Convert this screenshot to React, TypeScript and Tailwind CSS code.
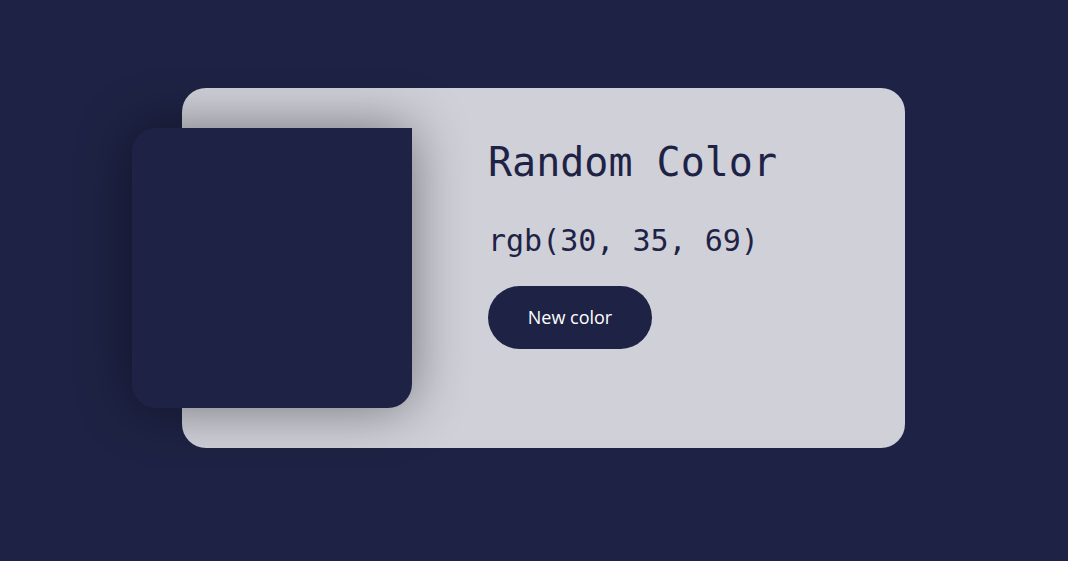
export default function App() {
  return (
    <div className="min-h-[561px] bg-[#1e2345] pt-[88px] pl-[182px]">
      <div className="flex w-[723px] h-[360px] rounded-3xl bg-[#d0d0d9]">
        <div className="-ml-[50px] mt-10 w-[280px] h-[280px] shrink-0 rounded-3xl rounded-tr-none bg-[#1e2345] shadow-[0_0_55px_rgba(0,0,0,0.45)]" />
        <div className="ml-[76px] pt-[54px] text-[#1e2345]">
          <h1 className="font-['DejaVu_Sans_Mono',monospace] text-[40px] leading-[40px]">
            Random Color
          </h1>
          <p className="mt-[44px] font-['DejaVu_Sans_Mono',monospace] text-[30px] leading-[30px]">
            rgb(30, 35, 69)
          </p>
          <button className="mt-[30px] w-[164px] h-[63px] rounded-full bg-[#1e2345] text-white font-['Open_Sans',sans-serif] text-[18px] cursor-pointer">
            New color
          </button>
        </div>
      </div>
    </div>
  );
}
